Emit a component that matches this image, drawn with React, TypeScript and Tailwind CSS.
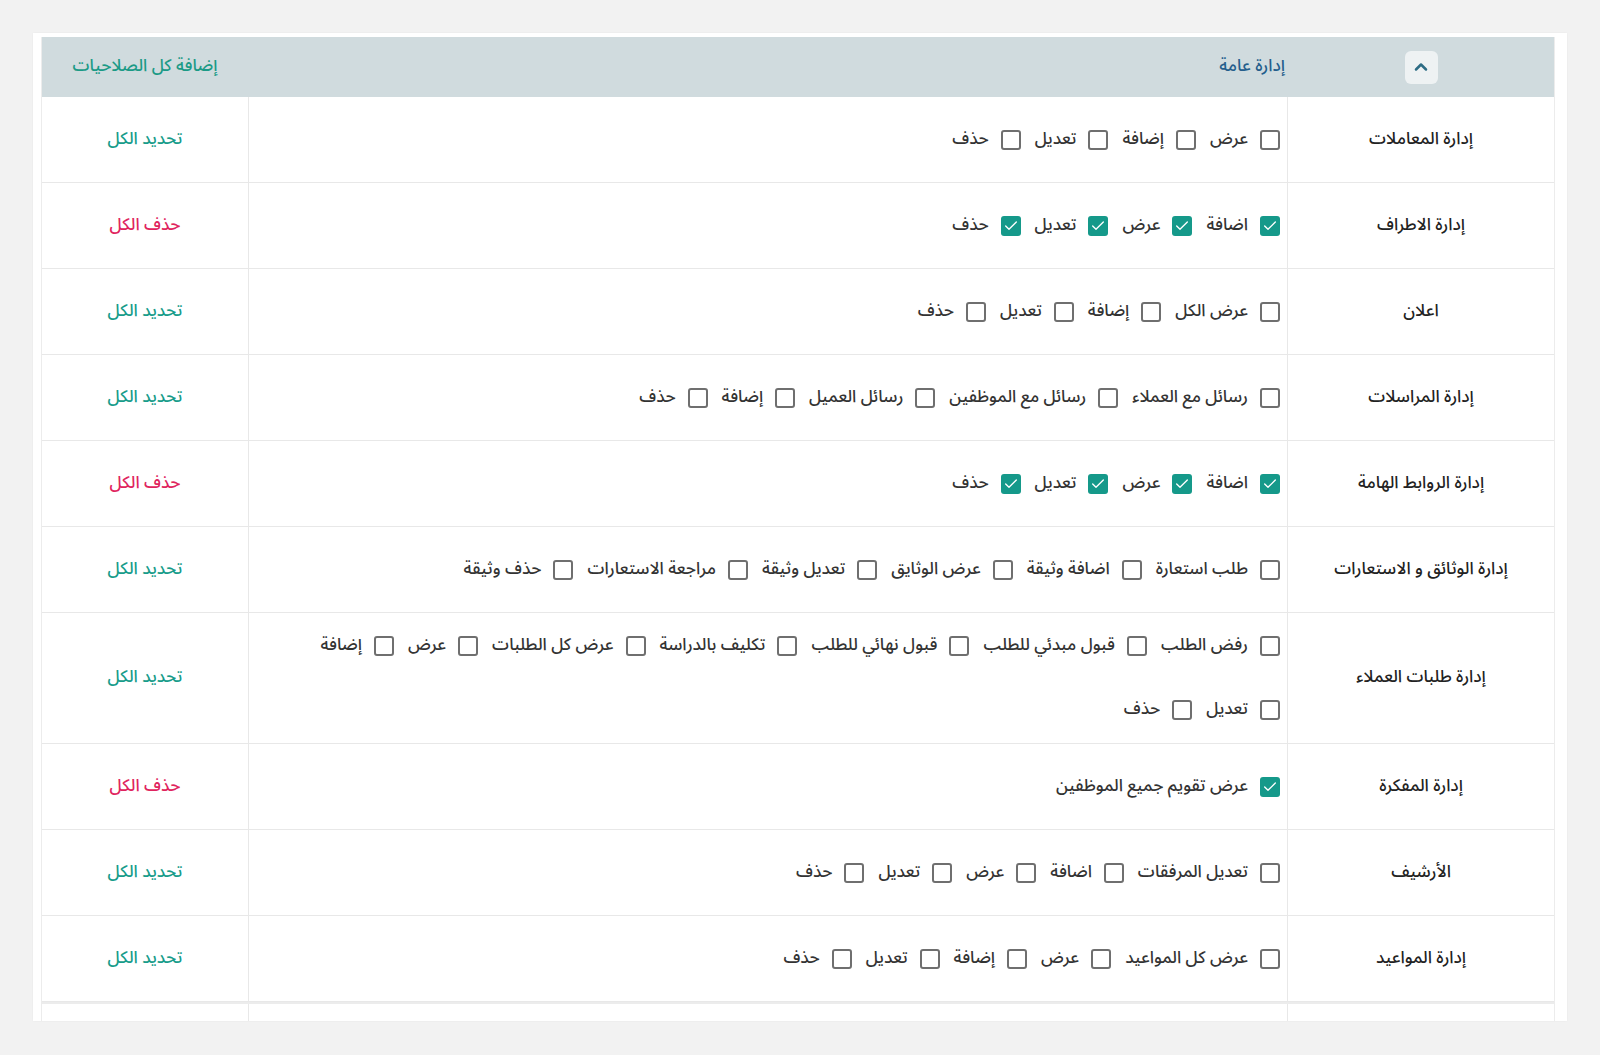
import { Check, ChevronUp } from "lucide-react";

type Perm = { label: string; on?: boolean };
type Row = { title: string; lines: Perm[][]; allOn?: boolean };

const font = { fontFamily: '"Noto Sans Arabic", "DejaVu Sans", sans-serif' };

const p = (labels: string[], on = false): Perm[] =>
  labels.map((label) => ({ label, on }));

const rows: Row[] = [
  { title: "إدارة المعاملات", lines: [p(["عرض", "إضافة", "تعديل", "حذف"])] },
  {
    title: "إدارة الاطراف",
    lines: [p(["اضافة", "عرض", "تعديل", "حذف"], true)],
    allOn: true,
  },
  { title: "اعلان", lines: [p(["عرض الكل", "إضافة", "تعديل", "حذف"])] },
  {
    title: "إدارة المراسلات",
    lines: [
      p(["رسائل مع العملاء", "رسائل مع الموظفين", "رسائل العميل", "إضافة", "حذف"]),
    ],
  },
  {
    title: "إدارة الروابط الهامة",
    lines: [p(["اضافة", "عرض", "تعديل", "حذف"], true)],
    allOn: true,
  },
  {
    title: "إدارة الوثائق و الاستعارات",
    lines: [
      p([
        "طلب استعارة",
        "اضافة وثيقة",
        "عرض الوثايق",
        "تعديل وثيقة",
        "مراجعة الاستعارات",
        "حذف وثيقة",
      ]),
    ],
  },
  {
    title: "إدارة طلبات العملاء",
    lines: [
      p([
        "رفض الطلب",
        "قبول مبدئي للطلب",
        "قبول نهائي للطلب",
        "تكليف بالدراسة",
        "عرض كل الطلبات",
        "عرض",
        "إضافة",
      ]),
      p(["تعديل", "حذف"]),
    ],
  },
  {
    title: "إدارة المفكرة",
    lines: [p(["عرض تقويم جميع الموظفين"], true)],
    allOn: true,
  },
  {
    title: "الأرشيف",
    lines: [p(["تعديل المرفقات", "اضافة", "عرض", "تعديل", "حذف"])],
  },
  {
    title: "إدارة المواعيد",
    lines: [p(["عرض كل المواعيد", "عرض", "إضافة", "تعديل", "حذف"])],
  },
];

function Box({ on }: { on?: boolean }) {
  return on ? (
    <span className="flex h-5 w-5 flex-none items-center justify-center rounded-[3px] bg-[#15998a]">
      <Check className="h-4 w-4 text-white" strokeWidth={2} />
    </span>
  ) : (
    <span className="h-5 w-5 flex-none rounded-[3px] border-2 border-[#6f6f6f]" />
  );
}

function PermRow({ row }: { row: Row }) {
  return (
    <div className="grid min-h-[86px] grid-cols-[266px_1fr_206px] border-b border-[#e8e8e8]">
      <div className="flex items-center justify-center text-[17px] font-medium text-[#222]">
        {row.title}
      </div>
      <div className="flex flex-col justify-center gap-y-[20px] border-x border-[#e8e8e8] py-[11px] pr-[7px]">
        {row.lines.map((line, i) => (
          <div key={i} className="flex h-[44px] items-center gap-x-[14px]">
            {line.map((perm) => (
              <label
                key={perm.label}
                className="flex items-center gap-x-[12px] text-[17px] font-medium text-[#333]"
              >
                <Box on={perm.on} />
                <span>{perm.label}</span>
              </label>
            ))}
          </div>
        ))}
      </div>
      <div
        className={`flex items-center justify-center text-[17px] font-medium ${
          row.allOn ? "text-[#e0245e]" : "text-[#179c8a]"
        }`}
      >
        {row.allOn ? "حذف الكل" : "تحديد الكل"}
      </div>
    </div>
  );
}

export default function App() {
  return (
    <div className="min-h-screen bg-[#f2f2f2] px-[33px] pt-[33px]" style={font}>
      <div className="h-[988px] overflow-hidden bg-white pl-2 pr-3 pt-1 shadow-[0_0_2px_rgba(0,0,0,0.05)]">
        <div dir="rtl" className="border-x border-[#ececec]">
          <div className="grid h-[60px] grid-cols-[266px_1fr_206px] bg-[#d0dbde]">
            <div className="flex items-center justify-center">
              <button className="flex h-[33px] w-[33px] items-center justify-center rounded-md bg-[#eef2f3]">
                <ChevronUp className="h-5 w-5 text-[#2d6c84]" strokeWidth={3} />
              </button>
            </div>
            <div className="flex items-center pr-[3px] text-[17px] font-medium text-[#245e8c]">
              إدارة عامة
            </div>
            <div className="flex items-center justify-center text-[17px] font-medium text-[#1b9a86]">
              إضافة كل الصلاحيات
            </div>
          </div>
          {rows.map((row) => (
            <PermRow key={row.title} row={row} />
          ))}
          <div className="grid h-[40px] grid-cols-[266px_1fr_206px] border-t-2 border-[#ececec]">
            <div />
            <div className="border-x border-[#e8e8e8]" />
            <div />
          </div>
        </div>
      </div>
    </div>
  );
}
